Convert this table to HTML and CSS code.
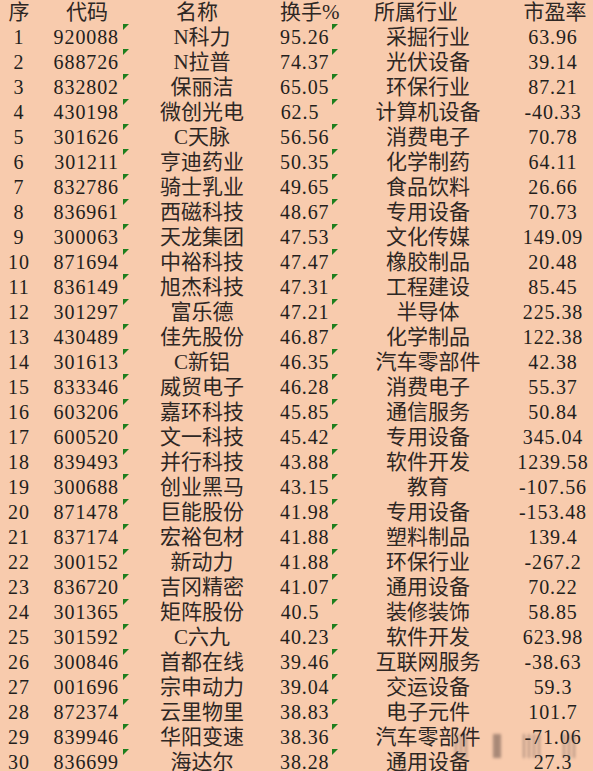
FILE: index.html
```html
<!DOCTYPE html>
<html lang="zh-CN">
<head>
<meta charset="utf-8">
<title>换手率排行</title>
<link rel="stylesheet" href="styles.css">
</head>
<body>
<div class="sheet">
<table class="grid">
<colgroup>
<col class="c-a"><col class="c-b"><col class="c-c"><col class="c-d"><col class="c-e"><col class="c-f">
</colgroup>
<thead>
<tr class="head">
<th class="a">序</th><th class="b">代码</th><th class="c">名称</th><th class="d">换手%</th><th class="e">所属行业</th><th class="f">市盈率</th>
</tr>
</thead>
<tbody>
<tr><td class="a n">1</td><td class="b n">920088</td><td class="c t">N科力</td><td class="d n">95.26</td><td class="e t">采掘行业</td><td class="f n">63.96</td></tr>
<tr><td class="a n">2</td><td class="b n">688726</td><td class="c t">N拉普</td><td class="d n">74.37</td><td class="e t">光伏设备</td><td class="f n">39.14</td></tr>
<tr><td class="a n">3</td><td class="b n">832802</td><td class="c t">保丽洁</td><td class="d n">65.05</td><td class="e t">环保行业</td><td class="f n">87.21</td></tr>
<tr><td class="a n">4</td><td class="b n">430198</td><td class="c t">微创光电</td><td class="d n">62.5</td><td class="e t">计算机设备</td><td class="f n">-40.33</td></tr>
<tr><td class="a n">5</td><td class="b n">301626</td><td class="c t">C天脉</td><td class="d n">56.56</td><td class="e t">消费电子</td><td class="f n">70.78</td></tr>
<tr><td class="a n">6</td><td class="b n">301211</td><td class="c t">亨迪药业</td><td class="d n">50.35</td><td class="e t">化学制药</td><td class="f n">64.11</td></tr>
<tr><td class="a n">7</td><td class="b n">832786</td><td class="c t">骑士乳业</td><td class="d n">49.65</td><td class="e t">食品饮料</td><td class="f n">26.66</td></tr>
<tr><td class="a n">8</td><td class="b n">836961</td><td class="c t">西磁科技</td><td class="d n">48.67</td><td class="e t">专用设备</td><td class="f n">70.73</td></tr>
<tr><td class="a n">9</td><td class="b n">300063</td><td class="c t">天龙集团</td><td class="d n">47.53</td><td class="e t">文化传媒</td><td class="f n">149.09</td></tr>
<tr><td class="a n">10</td><td class="b n">871694</td><td class="c t">中裕科技</td><td class="d n">47.47</td><td class="e t">橡胶制品</td><td class="f n">20.48</td></tr>
<tr><td class="a n">11</td><td class="b n">836149</td><td class="c t">旭杰科技</td><td class="d n">47.31</td><td class="e t">工程建设</td><td class="f n">85.45</td></tr>
<tr><td class="a n">12</td><td class="b n">301297</td><td class="c t">富乐德</td><td class="d n">47.21</td><td class="e t">半导体</td><td class="f n">225.38</td></tr>
<tr><td class="a n">13</td><td class="b n">430489</td><td class="c t">佳先股份</td><td class="d n">46.87</td><td class="e t">化学制品</td><td class="f n">122.38</td></tr>
<tr><td class="a n">14</td><td class="b n">301613</td><td class="c t">C新铝</td><td class="d n">46.35</td><td class="e t">汽车零部件</td><td class="f n">42.38</td></tr>
<tr><td class="a n">15</td><td class="b n">833346</td><td class="c t">威贸电子</td><td class="d n">46.28</td><td class="e t">消费电子</td><td class="f n">55.37</td></tr>
<tr><td class="a n">16</td><td class="b n">603206</td><td class="c t">嘉环科技</td><td class="d n">45.85</td><td class="e t">通信服务</td><td class="f n">50.84</td></tr>
<tr><td class="a n">17</td><td class="b n">600520</td><td class="c t">文一科技</td><td class="d n">45.42</td><td class="e t">专用设备</td><td class="f n">345.04</td></tr>
<tr><td class="a n">18</td><td class="b n">839493</td><td class="c t">并行科技</td><td class="d n">43.88</td><td class="e t">软件开发</td><td class="f n">1239.58</td></tr>
<tr><td class="a n">19</td><td class="b n">300688</td><td class="c t">创业黑马</td><td class="d n">43.15</td><td class="e t">教育</td><td class="f n">-107.56</td></tr>
<tr><td class="a n">20</td><td class="b n">871478</td><td class="c t">巨能股份</td><td class="d n">41.98</td><td class="e t">专用设备</td><td class="f n">-153.48</td></tr>
<tr><td class="a n">21</td><td class="b n">837174</td><td class="c t">宏裕包材</td><td class="d n">41.88</td><td class="e t">塑料制品</td><td class="f n">139.4</td></tr>
<tr><td class="a n">22</td><td class="b n">300152</td><td class="c t">新动力</td><td class="d n">41.88</td><td class="e t">环保行业</td><td class="f n">-267.2</td></tr>
<tr><td class="a n">23</td><td class="b n">836720</td><td class="c t">吉冈精密</td><td class="d n">41.07</td><td class="e t">通用设备</td><td class="f n">70.22</td></tr>
<tr><td class="a n">24</td><td class="b n">301365</td><td class="c t">矩阵股份</td><td class="d n">40.5</td><td class="e t">装修装饰</td><td class="f n">58.85</td></tr>
<tr><td class="a n">25</td><td class="b n">301592</td><td class="c t">C六九</td><td class="d n">40.23</td><td class="e t">软件开发</td><td class="f n">623.98</td></tr>
<tr><td class="a n">26</td><td class="b n">300846</td><td class="c t">首都在线</td><td class="d n">39.46</td><td class="e t">互联网服务</td><td class="f n">-38.63</td></tr>
<tr><td class="a n">27</td><td class="b n">001696</td><td class="c t">宗申动力</td><td class="d n">39.04</td><td class="e t">交运设备</td><td class="f n">59.3</td></tr>
<tr><td class="a n">28</td><td class="b n">872374</td><td class="c t">云里物里</td><td class="d n">38.83</td><td class="e t">电子元件</td><td class="f n">101.7</td></tr>
<tr><td class="a n">29</td><td class="b n">839946</td><td class="c t">华阳变速</td><td class="d n">38.36</td><td class="e t">汽车零部件</td><td class="f n">-71.06</td></tr>
<tr><td class="a n">30</td><td class="b n">836699</td><td class="c t">海达尔</td><td class="d n">38.28</td><td class="e t">通用设备</td><td class="f n">27.3</td></tr>
</tbody>
</table>
<div class="watermark" aria-hidden="true"><span class="wm1"></span><span class="wm2"></span><span class="wm3"></span><span class="wm4"></span></div>
</div>
</body>
</html>
```

FILE: styles.css
```css
html, body {
  margin: 0;
  padding: 0;
  background: #f8cbad;
}
body {
  width: 593px;
  height: 771px;
  overflow: hidden;
  color: #231e1c;
}
.sheet {
  position: relative;
  width: 593px;
}
.grid {
  border-collapse: collapse;
  table-layout: fixed;
  width: 593px;
}
.c-a { width: 38px; }
.c-b { width: 86px; }
.c-c { width: 156px; }
.c-d { width: 53px; }
.c-e { width: 180px; }
.c-f { width: 80px; }

.grid th, .grid td {
  padding: 0;
  height: 25px;
  line-height: 25px;
  white-space: nowrap;
  text-align: center;
  font-weight: 400;
  vertical-align: top;
  position: relative;
  overflow: visible;
}
.grid .head th {
  height: 24px;
  line-height: 24px;
  font-family: "Liberation Serif", "Noto Sans CJK SC", sans-serif;
  font-size: 21px;
  color: #2e2724;
}
.n {
  font-family: "Liberation Serif", "Noto Sans CJK SC", serif;
  font-size: 20px;
  letter-spacing: 0.9px;
}
.grid td.n {
  padding-top: 2px;
  height: 23px;
  line-height: 23px;
}
.t {
  font-family: "Liberation Serif", "Noto Sans CJK SC", serif;
  font-size: 21px;
  color: #2e2724;
}
.grid td.t {
  padding-top: 1px;
  height: 24px;
  line-height: 24px;
}
th.b { padding-left: 12px; }
th.c { padding-right: 10px; }
th.d { padding-right: 12px; }
th.e { padding-right: 14px; }
th.f { padding-left: 4px; }

td.b { text-align: right; padding-right: 5px; }
td.d { padding-right: 13px; }
td.e { padding-left: 10px; }

td.t::before {
  content: "";
  position: absolute;
  left: -1px;
  top: 0;
  width: 0;
  height: 0;
  border-top: 6px solid #1d7f1d;
  border-right: 6px solid transparent;
}

.watermark {
  position: absolute;
  left: 455px;
  top: 734px;
  width: 125px;
  height: 24px;
  filter: blur(1.8px);
  opacity: 0.45;
}
.watermark span {
  position: absolute;
  top: 0;
  height: 24px;
  background: repeating-linear-gradient(90deg, #5a4a48 0 2px, transparent 2px 5px);
}
.wm1 { left: 0; width: 14px; }
.wm2 { left: 38px; width: 8px; background: #4a3a38 !important; }
.wm3 { left: 68px; width: 20px; }
.wm4 { left: 108px; width: 14px; }
```
